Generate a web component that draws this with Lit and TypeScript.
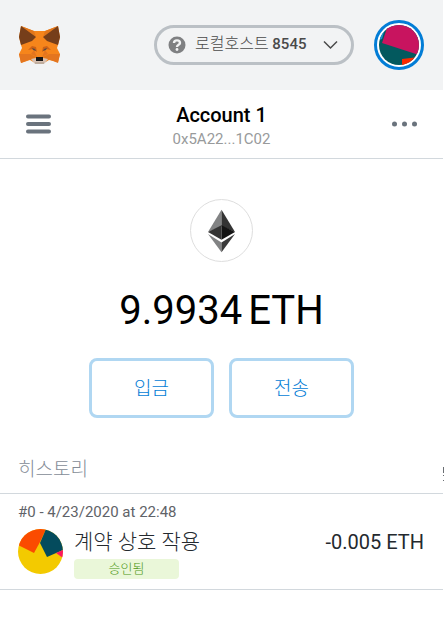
import { LitElement, html, css, svg } from "lit";
import { customElement } from "lit/decorators.js";

const fox = svg`
  <path fill="#f6851b" d="M3 0 16 5H27L40 0 42 11 40 19 39 22 42 28 40 36 31 34 26 37H17L12 34 3 37 1 28 4 22 3 19 1 11Z"/>
  <path fill="#e2761b" d="M3 0 16 5 18 11ZM40 0 27 5 25 11Z"/>
  <path fill="#763e1a" d="M3 0 18 11 14 15 3 19 1 11ZM40 0 25 11 29 15 40 19 42 11Z"/>
  <path fill="#e4751f" d="M1 28H12L13 33 3 37ZM42 28H31L30 33 40 37ZM16 24 19 31 13 28ZM27 24 24 31 30 28Z"/>
  <path fill="#cd6116" d="M10 24 14 20 18 21 19 26 15 23ZM33 24 29 20 25 21 24 26 28 23Z"/>
  <path fill="#e2761b" d="M12 28 18 31 12 34ZM31 28 25 31 31 34Z"/>
  <path fill="#5b4b42" d="M14 22 17 23 18 25 15 24ZM29 22 26 23 25 25 28 24Z"/>
  <path fill="#d7c1b3" d="M13 33 18 32H25L30 33 26 38H17Z"/>
  <path fill="#c0ad9e" d="M17 36H26V38H17Z"/>
  <path fill="#161616" d="M18 31H25V35H18Z"/>`;

@customElement("app-root")
export class AppRoot extends LitElement {
  static styles = css`
    :host {
      display: block;
      position: relative;
      overflow: hidden;
      min-height: 100vh;
      padding-right: 1px;
      box-sizing: border-box;
      background: #fff;
      color: #000;
      font-family: Roboto, "Noto Sans CJK KR", sans-serif;
    }
    svg { display: block; }
    button {
      font-family: inherit;
      background: none;
      border: 0;
      padding: 0;
      cursor: pointer;
    }
    .korean { font-size: 16px; font-weight: 300; }
    .top {
      display: flex;
      align-items: center;
      height: 90px;
      box-sizing: border-box;
      padding: 0 19px 0 18px;
      background: #f2f3f4;
    }
    .logo { margin-right: auto; }
    .network {
      display: flex;
      align-items: center;
      box-sizing: border-box;
      width: 200px;
      height: 40px;
      padding: 0 13px 0 11px;
      border: 3px solid #bbc0c5;
      border-radius: 20px;
      color: #4a4a4a;
      font-size: 15px;
      font-weight: 500;
      line-height: 20px;
    }
    .network-name { margin: 0 auto 2px 9px; white-space: nowrap; }
    .avatar {
      box-sizing: border-box;
      width: 50px;
      height: 50px;
      margin-left: 20px;
      padding: 2px;
      border: 3px solid #037dd6;
      border-radius: 50%;
      background: #fff;
    }
    .account {
      display: grid;
      grid-template-columns: 40px 1fr 40px;
      align-items: center;
      height: 69px;
      box-sizing: border-box;
      padding: 0 18px;
      border-bottom: 1px solid #d2d8dd;
    }
    .more { justify-self: end; }
    .who { text-align: center; padding-top: 4px; }
    .name { margin: 0; font-size: 20px; font-weight: 500; line-height: 24px; }
    .address { font-size: 15px; line-height: 20px; padding-top: 2px; color: #989a9b; }
    .overview { display: flex; flex-direction: column; align-items: center; padding-top: 40px; }
    .token {
      display: grid;
      place-items: center;
      box-sizing: border-box;
      width: 63px;
      height: 63px;
      border: 1px solid #dedede;
      border-radius: 50%;
    }
    .balance { display: flex; gap: 6px; margin-top: 24px; font-size: 40px; line-height: 50px; }
    .actions { display: flex; gap: 15px; margin-top: 22px; }
    .action {
      box-sizing: border-box;
      width: 125px;
      height: 60px;
      padding-bottom: 4px;
      border: 3px solid #b0d7f2;
      border-radius: 8px;
      color: #037dd6;
      font-size: 19px;
      font-weight: 300;
    }
    .history-title {
      margin: 0;
      padding: 38px 18px 10px;
      border-bottom: 1px solid #d2d8dd;
      color: #848c96;
      font-size: 19px;
      font-weight: 300;
      line-height: 27px;
    }
    .entry {
      padding: 8px 19px 10px 18px;
      border-bottom: 1px solid #d2d8dd;
    }
    .date { color: #5f6368; font-size: 15px; line-height: 20px; }
    .row { display: grid; grid-template-columns: 45px 1fr auto; column-gap: 11px; margin-top: 7px; }
    .what { display: flex; flex-direction: column; align-items: flex-start; }
    .kind { color: #24292e; font-size: 21px; font-weight: 300; line-height: 26px; }
    .status {
      width: 105px;
      height: 20px;
      margin-top: 4px;
      border-radius: 4px;
      background: #eaf7d9;
      color: #4d9614;
      font-size: 13px;
      font-weight: 300;
      line-height: 20px;
      text-align: center;
    }
    .amount { color: #24292e; font-size: 20px; line-height: 26px; }
    .edge { position: absolute; right: 0; top: 467px; }
  `;

  render() {
    return html`
      <header class="top">
        <svg class="logo" width="43" height="39" viewBox="0 0 43 39" role="img" aria-label="MetaMask">${fox}</svg>
        <button class="network">
          <svg width="18" height="18" viewBox="0 0 18 18" aria-hidden="true">
            <circle cx="9" cy="9" r="8.5" fill="#7f8082"/>
            <path d="M6 7C6 3.5 12 3.5 12 7 12 9 9 8.6 9 11" fill="none" stroke="#f2f3f4" stroke-width="2.4"/>
            <circle cx="9" cy="13.5" r="1.4" fill="#f2f3f4"/>
          </svg>
          <span class="network-name"><span class="korean">로컬호스트</span> 8545</span>
          <svg width="15" height="10" viewBox="0 0 15 10" aria-hidden="true"><path d="M1 1.5 7.5 8 14 1.5" fill="none" stroke="#4a4a4a" stroke-width="1.5"/></svg>
        </button>
        <button class="avatar" aria-label="Account 1">
          <svg width="40" height="40" viewBox="0 0 40 40" aria-hidden="true">
            <defs><clipPath id="a"><circle cx="20" cy="20" r="20"/></clipPath></defs>
            <g clip-path="url(#a)">
              <path fill="#03595e" d="M0 0H40V40H0Z"/>
              <path fill="#1b8fd0" d="M0 0H7L3 14 0 15Z"/>
              <path fill="#c8145f" d="M3 18 9 0H40V30Z"/>
              <path fill="#fa2a00" d="M23 34 40 32V40H23Z"/>
            </g>
          </svg>
        </button>
      </header>
      <section class="account">
        <button class="menu" aria-label="Menu">
          <svg width="40" height="20" viewBox="0 0 40 20"><path d="M10 2.5H31M10 10H31M10 17.5H31" stroke="#6a737d" stroke-width="4" stroke-linecap="round"/></svg>
        </button>
        <div class="who">
          <h1 class="name">Account 1</h1>
          <div class="address">0x5A22...1C02</div>
        </div>
        <button class="more" aria-label="Options">
          <svg width="33" height="6" viewBox="0 0 33 6" fill="#6a737d"><circle cx="2.5" cy="3" r="2.5"/><circle cx="12.5" cy="3" r="2.5"/><circle cx="22.5" cy="3" r="2.5"/></svg>
        </button>
      </section>
      <section class="overview">
        <div class="token">
          <svg width="27" height="44" viewBox="0 0 28 44" role="img" aria-label="Ethereum">
            <path fill="#828384" d="M14 0 0 23 14 17Z"/><path fill="#343434" d="M14 0 28 23 14 17Z"/>
            <path fill="#343434" d="M0 23 14 16V31Z"/><path fill="#141414" d="M28 23 14 16V31Z"/>
            <path fill="#828384" d="M0 25 14 34V44Z"/><path fill="#393939" d="M28 25 14 34V44Z"/>
          </svg>
        </div>
        <div class="balance"><span>9.9934</span><span>ETH</span></div>
        <div class="actions">
          <button class="action">입금</button>
          <button class="action">전송</button>
        </div>
      </section>
      <section>
        <h2 class="history-title">히스토리</h2>
        <article class="entry">
          <div class="date">#0 - 4/23/2020 at 22:48</div>
          <div class="row">
            <svg width="45" height="45" viewBox="0 0 45 45" aria-hidden="true">
              <defs><clipPath id="b"><circle cx="22.5" cy="22.5" r="22.5"/></clipPath></defs>
              <g clip-path="url(#b)">
                <path fill="#f3ca00" d="M0 0H45V45H0Z"/>
                <path fill="#fb4b00" d="M0 0H28L22 13 16 24 0 16Z"/>
                <path fill="#044b5d" d="M28 0H45V21L29 28 22 14Z"/>
                <path fill="#fb185f" d="M38 24 45 21V29Z"/>
              </g>
            </svg>
            <div class="what">
              <div class="kind">계약 상호 작용</div>
              <div class="status">승인됨</div>
            </div>
            <div class="amount">-0.005 ETH</div>
          </div>
        </article>
      </section>
      <svg class="edge" width="1" height="15" viewBox="0 0 1 15" aria-hidden="true"><path fill="#6a6e73" d="M0 0H1V6H0ZM0 8H1V9H0ZM0 13H1V14H0Z"/></svg>
    `;
  }
}
